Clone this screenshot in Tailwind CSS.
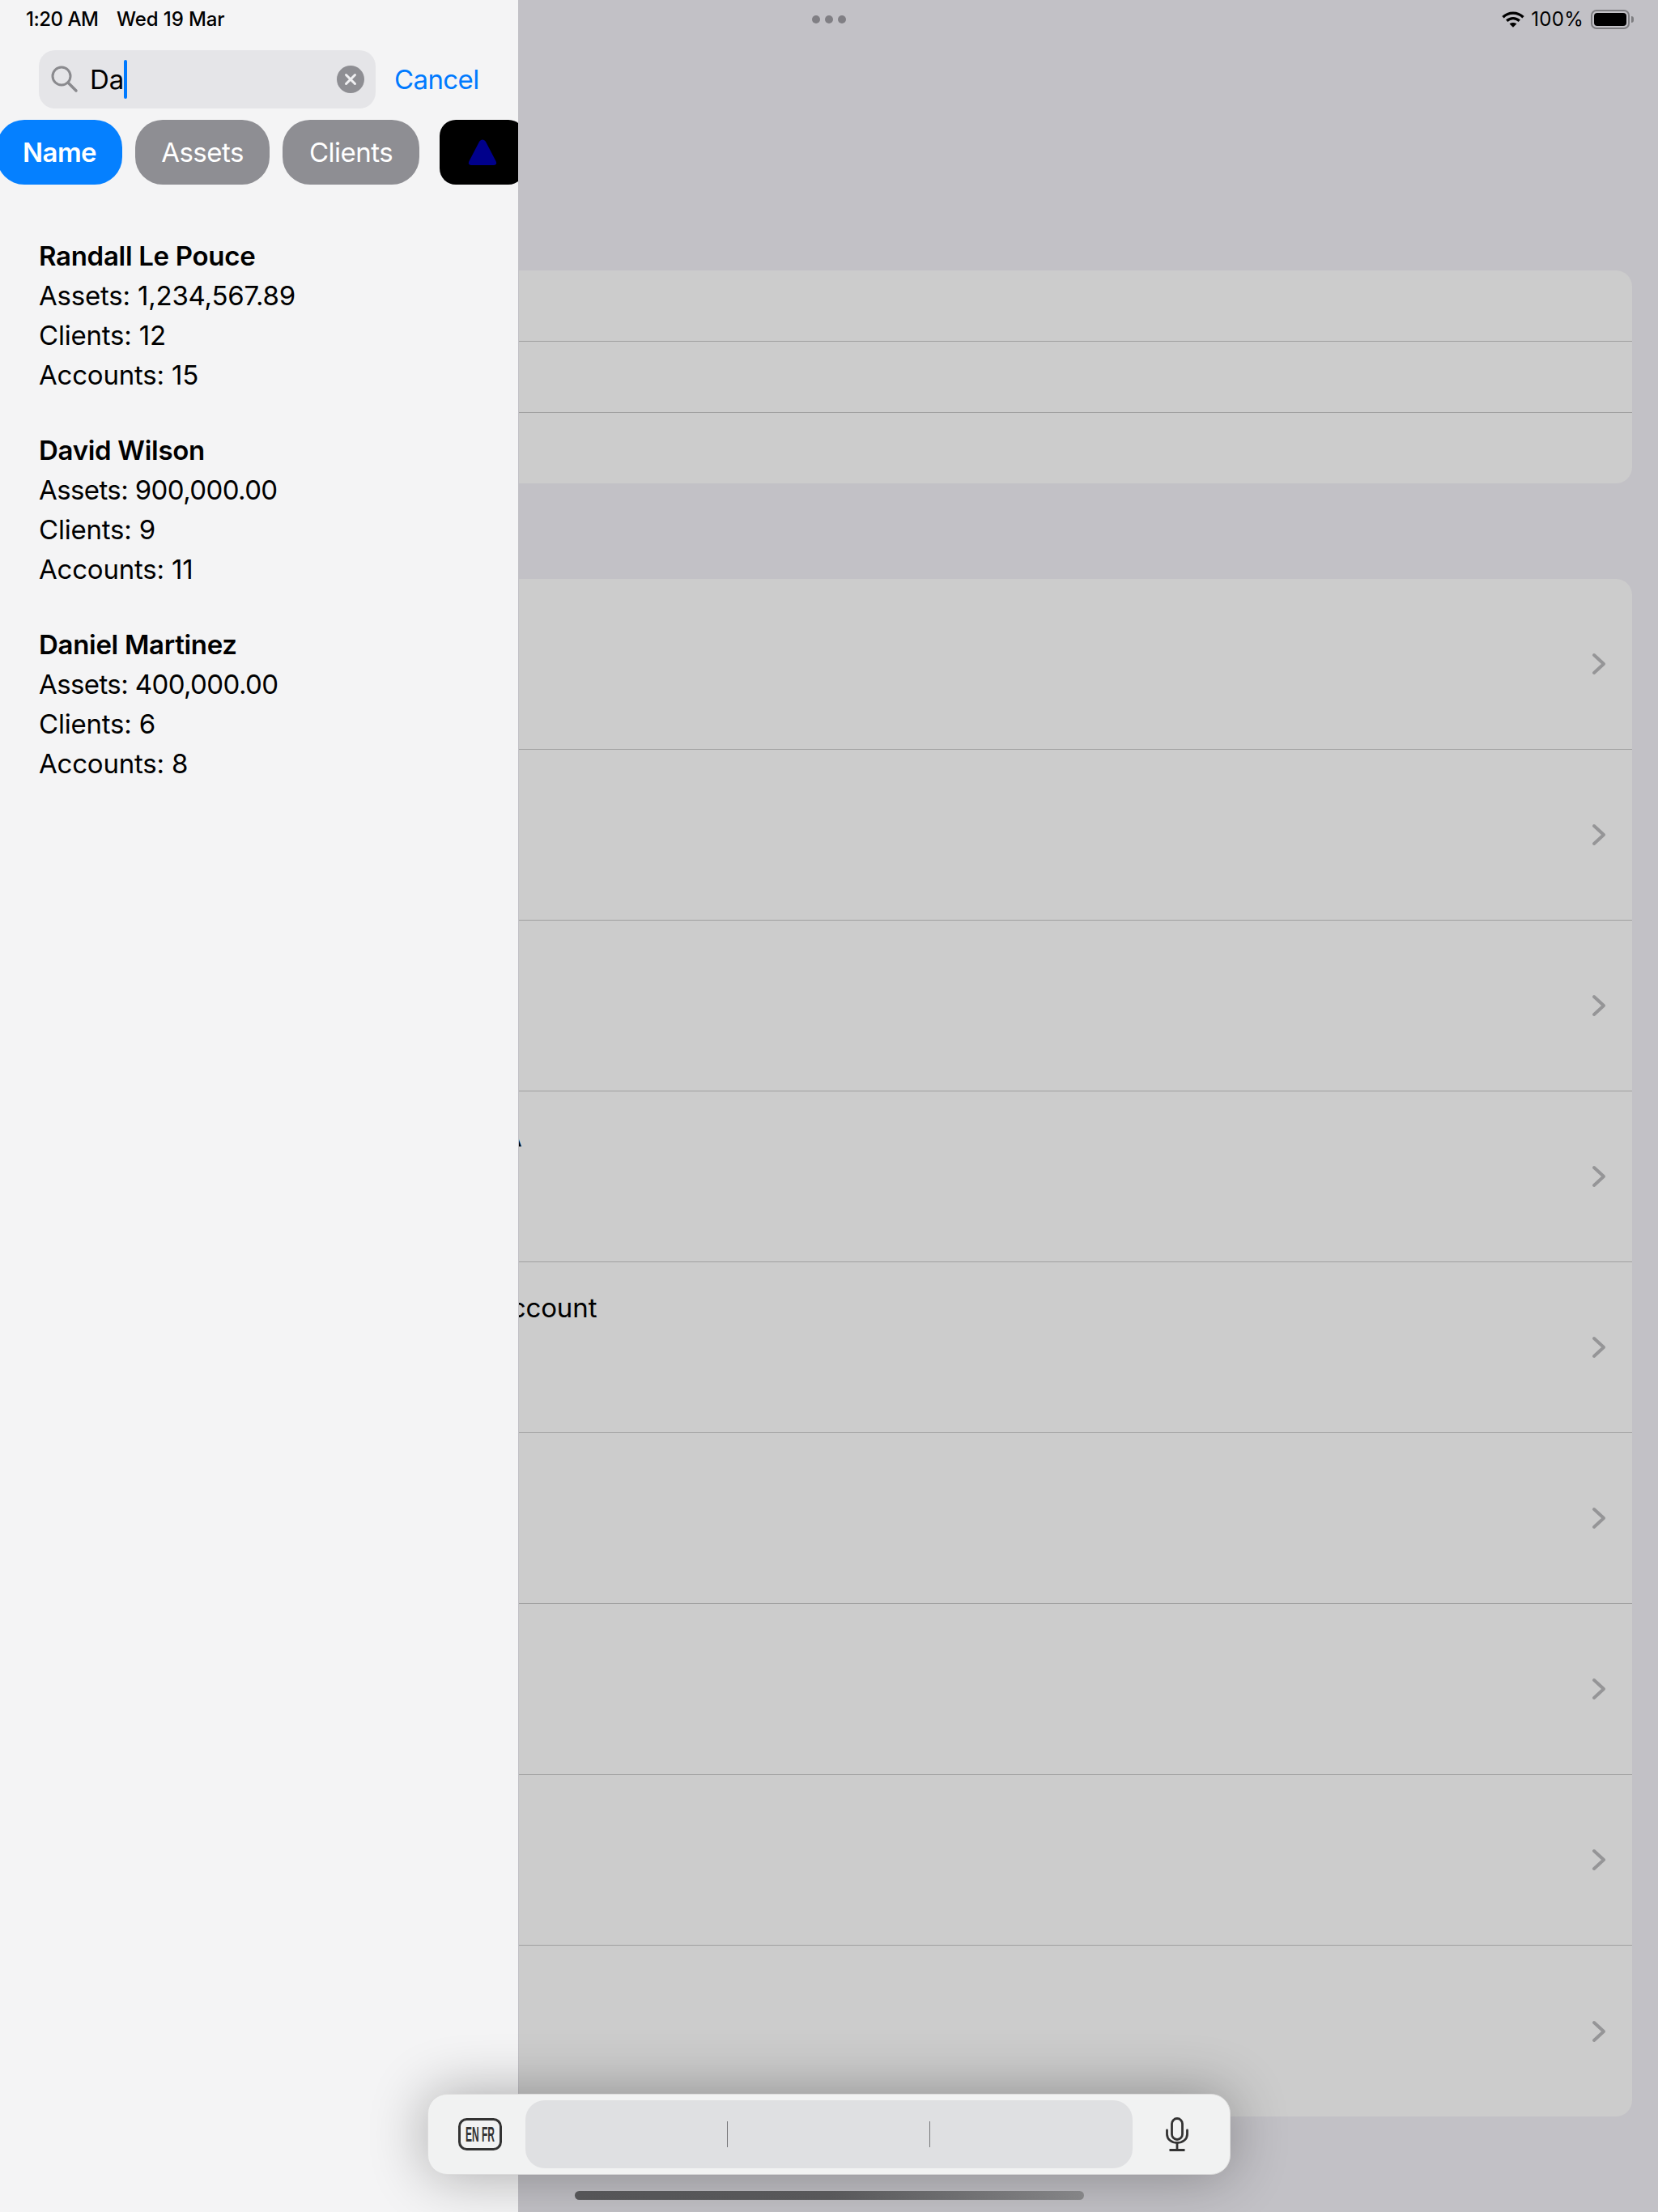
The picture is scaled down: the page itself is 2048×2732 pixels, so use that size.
<!DOCTYPE html>
<html lang="en">
<head>
    <meta charset="UTF-8">
    <meta name="viewport" content="width=device-width, initial-scale=1.0">
    <title>Search</title>
    <script src="https://cdn.jsdelivr.net/npm/@tailwindcss/browser@4"></script>
</head>
<body class="font-['Inter',sans-serif] text-black">
<div class="relative w-[2048px] h-[2732px] overflow-hidden bg-[#c2c1c6]">

    <!-- Top status: multitasking dots + wifi/battery -->
    <div class="absolute top-0 left-[640px] right-0 h-[48px] flex items-center">
        <div class="absolute left-[363px] top-[19px] flex gap-[6px]">
            <span class="w-[10px] h-[10px] rounded-full bg-[#807f84]"></span>
            <span class="w-[10px] h-[10px] rounded-full bg-[#807f84]"></span>
            <span class="w-[10px] h-[10px] rounded-full bg-[#807f84]"></span>
        </div>
        <div class="ml-auto mr-[30px] flex items-center h-[48px]">
            <svg class="w-[28px] h-[20px]" viewBox="0 0 28 20" fill="none" stroke="#000" stroke-width="3.4">
                <path d="M1.5 7.2C8.5 0.4 19.5 0.4 26.5 7.2"/>
                <path d="M6.2 11.8C10.8 7.6 17.2 7.6 21.8 11.8"/>
                <path d="M14 19.8L9.6 15.4C12 13.4 16 13.4 18.4 15.4Z" fill="#000" stroke="none"/>
            </svg>
            <span class="ml-[8px] text-[24px] leading-[28px] tracking-[0.3px]">100%</span>
            <div class="ml-[9px] w-[48px] h-[24px] rounded-[7px] border-2 border-[#7d7d80] p-[2px]">
                <div class="w-full h-full rounded-[4px] bg-black"></div>
            </div>
            <div class="ml-[2px] w-[3px] h-[8px] rounded-r-full bg-[#7d7d80]"></div>
        </div>
    </div>

    <!-- Page behind the panel -->
    <main class="pt-[334px] pl-[32px] pr-[32px]">
        <div class="rounded-[20px] bg-[#cccccc]">
            <div class="h-[88px] border-b border-[#a0a0a0]"></div>
            <div class="h-[88px] border-b border-[#a0a0a0]"></div>
            <div class="h-[87px]"></div>
        </div>

        <div class="mt-[118px] rounded-[20px] bg-[#cccccc]">
            <div class="h-[211px] border-b border-[#a0a0a0] flex items-center justify-end pr-[32px]">
                <svg class="w-[18px] h-[28px]" viewBox="0 0 18 28" fill="none" stroke="#959597" stroke-width="4" stroke-linecap="round" stroke-linejoin="round"><path d="M3 3L15 14L3 25"/></svg>
            </div>
            <div class="h-[211px] border-b border-[#a0a0a0] flex items-center justify-end pr-[32px]">
                <svg class="w-[18px] h-[28px]" viewBox="0 0 18 28" fill="none" stroke="#959597" stroke-width="4" stroke-linecap="round" stroke-linejoin="round"><path d="M3 3L15 14L3 25"/></svg>
            </div>
            <div class="h-[211px] border-b border-[#a0a0a0] flex items-center justify-end pr-[32px]">
                <svg class="w-[18px] h-[28px]" viewBox="0 0 18 28" fill="none" stroke="#959597" stroke-width="4" stroke-linecap="round" stroke-linejoin="round"><path d="M3 3L15 14L3 25"/></svg>
            </div>
            <div class="relative h-[211px] border-b border-[#a0a0a0] flex items-center justify-end pr-[32px]">
                <span class="absolute left-[590px] top-[36px] text-[33px] leading-[41px]">A</span>
                <svg class="w-[18px] h-[28px]" viewBox="0 0 18 28" fill="none" stroke="#959597" stroke-width="4" stroke-linecap="round" stroke-linejoin="round"><path d="M3 3L15 14L3 25"/></svg>
            </div>
            <div class="relative h-[211px] border-b border-[#a0a0a0] flex items-center justify-end pr-[32px]">
                <span class="absolute left-[576px] top-[36px] text-[33px] leading-[41px] tracking-[-0.1px]">Account</span>
                <svg class="w-[18px] h-[28px]" viewBox="0 0 18 28" fill="none" stroke="#959597" stroke-width="4" stroke-linecap="round" stroke-linejoin="round"><path d="M3 3L15 14L3 25"/></svg>
            </div>
            <div class="h-[211px] border-b border-[#a0a0a0] flex items-center justify-end pr-[32px]">
                <svg class="w-[18px] h-[28px]" viewBox="0 0 18 28" fill="none" stroke="#959597" stroke-width="4" stroke-linecap="round" stroke-linejoin="round"><path d="M3 3L15 14L3 25"/></svg>
            </div>
            <div class="h-[211px] border-b border-[#a0a0a0] flex items-center justify-end pr-[32px]">
                <svg class="w-[18px] h-[28px]" viewBox="0 0 18 28" fill="none" stroke="#959597" stroke-width="4" stroke-linecap="round" stroke-linejoin="round"><path d="M3 3L15 14L3 25"/></svg>
            </div>
            <div class="h-[211px] border-b border-[#a0a0a0] flex items-center justify-end pr-[32px]">
                <svg class="w-[18px] h-[28px]" viewBox="0 0 18 28" fill="none" stroke="#959597" stroke-width="4" stroke-linecap="round" stroke-linejoin="round"><path d="M3 3L15 14L3 25"/></svg>
            </div>
            <div class="h-[211px] flex items-center justify-end pr-[32px]">
                <svg class="w-[18px] h-[28px]" viewBox="0 0 18 28" fill="none" stroke="#959597" stroke-width="4" stroke-linecap="round" stroke-linejoin="round"><path d="M3 3L15 14L3 25"/></svg>
            </div>
        </div>
    </main>

    <!-- Search panel -->
    <aside class="absolute top-0 left-0 w-[641px] h-full overflow-hidden border-r border-[#c2c1c6] bg-[#f4f4f5]">
        <div class="h-[62px] pt-[10px] pl-[32px] flex text-[24px] leading-[28px] font-medium">
            <span class="w-[112px] tracking-[-0.5px]">1:20 AM</span>
            <span class="tracking-[-0.1px]">Wed 19 Mar</span>
        </div>

        <div class="flex items-center pl-[48px]">
            <div class="relative w-[416px] h-[72px] rounded-[20px] bg-[#e5e5e8] flex items-center">
                <svg class="ml-[14px] w-[36px] h-[36px]" viewBox="0 0 36 36" fill="none" stroke="#8a8a8e" stroke-width="3"><circle cx="14" cy="14" r="11"/><path d="M22 22L32 32" stroke-linecap="round" stroke-width="3.5"/></svg>
                <span class="ml-[13px] text-[33px] leading-[41px]">Da</span>
                <span class="w-[4px] h-[48px] rounded-full bg-[#007aff]"></span>
                <svg class="ml-auto mr-[14px] w-[34px] h-[34px]" viewBox="0 0 34 34"><circle cx="17" cy="17" r="17" fill="#8e8e93"/><path d="M11.5 11.5L22.5 22.5M22.5 11.5L11.5 22.5" stroke="#f0f0f2" stroke-width="3" stroke-linecap="round"/></svg>
            </div>
            <span class="ml-[23px] text-[33px] leading-[41px] text-[#007aff] tracking-[-0.6px]">Cancel</span>
        </div>

        <div class="mt-[14px] h-[80px] flex gap-[16px] -ml-[4px] text-[33px] text-white tracking-[-0.5px]">
            <div class="w-[155px] shrink-0 pt-[1px] rounded-[34px] bg-[#0580ff] flex items-center justify-center font-semibold">Name</div>
            <div class="w-[166px] shrink-0 pt-[1px] rounded-[34px] bg-[#8e8e93] flex items-center justify-center">Assets</div>
            <div class="w-[169px] shrink-0 pt-[1px] rounded-[34px] bg-[#8e8e93] flex items-center justify-center">Clients</div>
            <div class="ml-[9px] w-[105px] shrink-0 rounded-[20px] bg-black flex items-center justify-center">
                <svg class="w-[36px] h-[32px]" viewBox="0 0 36 32"><path d="M14 3C16 -0.5 20 -0.5 22 3L34.5 27C36 30 34.5 32 32 32H4C1.500 32 0 30 1.500 27Z" fill="#00008b"/></svg>
            </div>
        </div>

        <div class="pt-[64px] pl-[48px] flex flex-col gap-[44px] text-[33px] leading-[49px] tracking-[-0.2px]">
            <div>
                <p class="font-semibold tracking-[-0.3px]">Randall Le Pouce</p>
                <p>Assets: 1,234,567.89</p>
                <p>Clients: 12</p>
                <p>Accounts: 15</p>
            </div>
            <div>
                <p class="font-semibold tracking-[-0.3px]">David Wilson</p>
                <p class="tracking-[-0.6px]">Assets: 900,000.00</p>
                <p>Clients: 9</p>
                <p>Accounts: 11</p>
            </div>
            <div>
                <p class="font-semibold tracking-[-0.3px]">Daniel Martinez</p>
                <p class="tracking-[-0.6px]">Assets: 400,000.00</p>
                <p>Clients: 6</p>
                <p>Accounts: 8</p>
            </div>
        </div>
    </aside>

    <!-- Floating keyboard bar -->
    <div class="absolute left-[528px] top-[2586px] w-[992px] h-[100px] rounded-[24px] bg-[#f1f2f2] border border-[#dcdcdc] shadow-[0_0_70px_rgba(0,0,0,0.32)] flex items-center">
        <svg class="ml-[37px] w-[54px] h-[40px]" viewBox="0 0 54 40" fill="none">
            <rect x="1.500" y="1.500" width="51" height="37" rx="9" stroke="#333" stroke-width="3"/>
            <text x="9" y="29" textLength="36" lengthAdjust="spacingAndGlyphs" font-family="Liberation Sans" font-size="25" font-weight="700" fill="#333">EN FR</text>
        </svg>
        <div class="ml-[29px] w-[750px] h-[84px] rounded-[24px] bg-[#dfe0e2] flex items-center">
            <span class="ml-[249px] w-px h-[32px] bg-[#77777a]"></span>
            <span class="ml-[249px] w-px h-[32px] bg-[#77777a]"></span>
        </div>
        <svg class="ml-[41px] w-[28px] h-[42px]" viewBox="0 0 28 42" fill="none" stroke="#333" stroke-width="2.800">
            <rect x="7.500" y="1.500" width="13" height="26" rx="6.500"/>
            <path d="M1.500 16V21C1.500 27 7 31.500 14 31.500C21 31.500 26.500 27 26.500 21V16" stroke-linecap="round"/>
            <path d="M14 31.500V40M4.500 40.500H23.500"/>
        </svg>
    </div>

    <!-- Home indicator -->
    <div class="absolute left-[710px] top-[2706px] w-[629px] h-[11px] rounded-full bg-linear-to-r from-[#555557] via-[#58585a] to-[#858587]"></div>
</div>
</body>
</html>
